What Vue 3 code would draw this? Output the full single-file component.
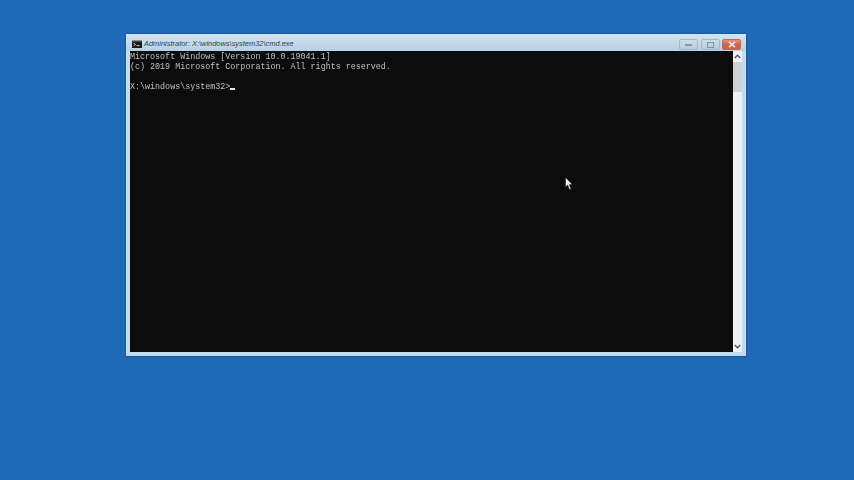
<script setup>
const lines = [
  'Microsoft Windows [Version 10.0.19041.1]',
  '(c) 2019 Microsoft Corporation. All rights reserved.',
  '\u00a0',
]
</script>

<template>
  <div class="desktop">
    <section class="window">
      <header class="titlebar">
        <svg class="appicon" width="10" height="8" viewBox="0 0 10 8">
          <rect width="10" height="8" fill="#1a1a1a" />
          <rect x="0" y="0" width="10" height="1.4" fill="#8a8f96" />
          <path d="M1.5 3 L3.5 4.4 L1.5 5.8" fill="none" stroke="#d8d8d8" stroke-width="0.9" />
          <rect x="4.5" y="5.2" width="3" height="0.9" fill="#d8d8d8" />
        </svg>
        <span class="title">Administrator: X:\windows\system32\cmd.exe</span>
        <div class="controls">
          <div class="btn min"><i class="dash"></i></div>
          <div class="btn max"><i class="box"></i></div>
          <div class="btn close">
            <svg width="8" height="7" viewBox="0 0 8 7">
              <path d="M1 0.8 L7 6.2 M7 0.8 L1 6.2" stroke="#f2e4e0" stroke-width="1.7" />
            </svg>
          </div>
        </div>
      </header>
      <div class="body">
        <div class="console">
          <div v-for="(l, i) in lines" :key="i" class="line">{{ l }}</div>
          <div class="line">X:\windows\system32&gt;<span class="caret"></span></div>
        </div>
        <aside class="scrollbar">
          <svg class="arrow" width="7" height="5" viewBox="0 0 7 5">
            <path d="M0.8 4 L3.5 1.2 L6.2 4" fill="none" stroke="#4a5056" stroke-width="1.3" />
          </svg>
          <div class="thumb"></div>
          <div class="track"></div>
          <svg class="arrow" width="7" height="5" viewBox="0 0 7 5">
            <path d="M0.8 1 L3.5 3.8 L6.2 1" fill="none" stroke="#4a5056" stroke-width="1.3" />
          </svg>
        </aside>
      </div>
    </section>
    <svg class="cursor" width="9" height="14" viewBox="0 0 9 14">
      <path d="M0.5 0.5 L0.5 10 L2.7 8 L4.4 12.6 L6 12 L4.4 7.6 L7.4 7.4 Z" fill="#f4f4f4" stroke="#222" stroke-width="0.6" />
    </svg>
  </div>
</template>

<style>
html, body { margin: 0; background: #1f69b6; }
</style>

<style scoped>
.desktop {
  position: relative;
  width: 854px;
  height: 480px;
  box-sizing: border-box;
  padding: 34px 0 0 126px;
  background: #1f69b6;
  overflow: hidden;
}
.window {
  width: 620px;
  height: 322px;
  box-sizing: border-box;
  display: flex;
  flex-direction: column;
  padding: 0 4px 4px;
  background: #c0dcee;
  box-shadow: 0 0 1px 1px rgba(30, 70, 110, .4);
  border-radius: 2px 2px 0 0;
}
.titlebar {
  height: 17px;
  flex: none;
  display: flex;
  align-items: center;
  background: linear-gradient(180deg, #d4e4ef 0%, #b7d0e3 100%);
  margin: 0 -4px;
  padding: 0 5px 0 6px;
}
.appicon { flex: none; margin-top: 3px; }
.title {
  margin: 3px 0 0 2px;
  font: italic 7.45px/10px "Liberation Sans", Arial, sans-serif;
  color: #333d47;
  white-space: nowrap;
}
.controls {
  margin-left: auto;
  display: flex;
  align-self: flex-start;
  gap: 2px;
  margin-top: 5px;
}
.min { margin-right: 1px; }
.btn {
  width: 19px;
  height: 11px;
  box-sizing: border-box;
  display: flex;
  align-items: center;
  justify-content: center;
  border: 1px solid #a3bacb;
  border-radius: 2px;
  background: linear-gradient(180deg, #cfdeea 0%, #b7cbdc 100%);
}
.close {
  border-color: #b0705c;
  background: linear-gradient(180deg, #e2937e 0%, #cf5f48 55%, #c9634c 100%);
}
.dash { width: 7px; height: 2px; background: #8595a4; }
.box { width: 7px; height: 6px; box-sizing: border-box; border: 1px solid #8595a4; }
.body {
  flex: 1;
  min-height: 0;
  display: flex;
}
.console {
  flex: 1;
  box-sizing: border-box;
  padding: 1px 0 0 0;
  background: #0c0c0c;
  color: #c0c0c0;
  font: 8.37px/10px "Liberation Mono", "DejaVu Sans Mono", monospace;
  filter: blur(0.35px);
}
.line { height: 10px; white-space: pre; }
.caret {
  display: inline-block;
  width: 5px;
  height: 2px;
  background: #e6e6e6;
  vertical-align: -1px;
}
.scrollbar {
  width: 9px;
  flex: none;
  display: flex;
  flex-direction: column;
  align-items: center;
  background: #eef1f3;
}
.arrow { flex: none; margin: 3px 0; }
.thumb { width: 100%; height: 30px; flex: none; margin-top: 0; background: #cfd2d3; }
.track { flex: 1; }
.cursor {
  position: absolute;
  left: 565px;
  top: 177px;
}
</style>
